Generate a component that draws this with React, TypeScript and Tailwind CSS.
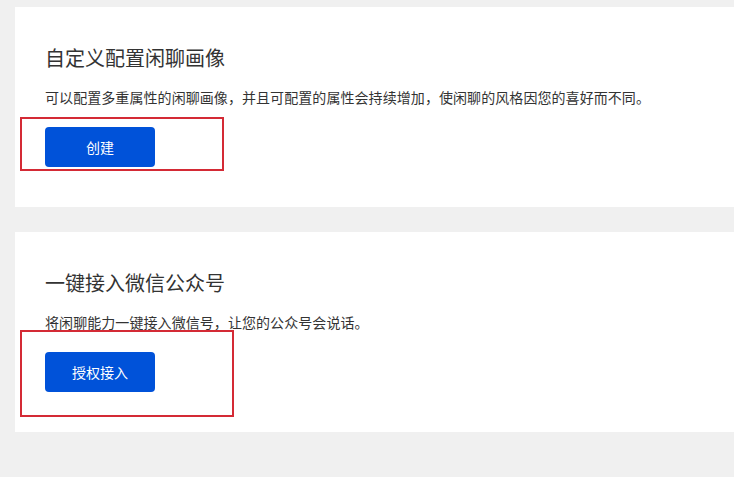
import React from "react";

function Card({
  title,
  desc,
  button,
  box,
}: {
  title: string;
  desc: string;
  button: string;
  box: string;
}) {
  return (
    <div className="relative h-[200px] bg-white pl-[30px] pt-[37px]">
      <h2 className="text-[20px] leading-[28px] font-normal text-[#333333]">{title}</h2>
      <p className="mt-[15px] text-[14px] leading-[20px] tracking-[0.07px] text-[#333333] whitespace-nowrap">{desc}</p>
      <button className="mt-[20px] flex h-[40px] w-[110px] items-center justify-center rounded-[4px] bg-[#0052d9] text-[14px] text-white">
        {button}
      </button>
      <div className={`pointer-events-none absolute border-2 border-[#d42a35] ${box}`} />
    </div>
  );
}

export default function App() {
  return (
    <div
      className="min-h-screen w-[734px] overflow-hidden bg-[#f0f0f0] pl-[15px] pt-[7px]"
      style={{ fontFamily: '"Microsoft YaHei", "Noto Sans CJK SC", "Noto Sans", sans-serif' }}
    >
      <div className="flex flex-col gap-[25px]">
        <Card
          title="自定义配置闲聊画像"
          desc="可以配置多重属性的闲聊画像，并且可配置的属性会持续增加，使闲聊的风格因您的喜好而不同。"
          button="创建"
          box="left-[5px] top-[110px] h-[54px] w-[204px]"
        />
        <Card
          title="一键接入微信公众号"
          desc="将闲聊能力一键接入微信号，让您的公众号会说话。"
          button="授权接入"
          box="left-[5px] top-[98px] h-[87px] w-[214px]"
        />
      </div>
    </div>
  );
}
